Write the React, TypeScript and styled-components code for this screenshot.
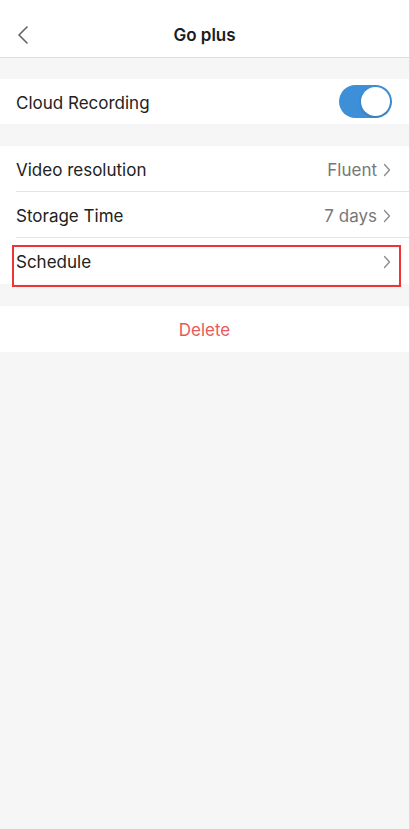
import React, { useState } from 'react'
import styled, { createGlobalStyle } from 'styled-components'

const GlobalStyle = createGlobalStyle`
  html, body {
    margin: 0;
    padding: 0;
    background: #f6f6f6;
    font-family: Inter, 'Liberation Sans', Arial, sans-serif;
  }
`

type Row = {
  label: string
  value?: string
  highlighted?: boolean
}

const rows: Row[] = [
  { label: 'Video resolution', value: 'Fluent' },
  { label: 'Storage Time', value: '7 days' },
  { label: 'Schedule', highlighted: true },
]

const Chevron = () => (
  <svg width='8' height='14' viewBox='0 0 8 14' fill='none'>
    <path d='M1.5 1.5L6.5 7L1.5 12.5' stroke='#8a8a8f' strokeWidth='1.3' strokeLinecap='round' strokeLinejoin='round' />
  </svg>
)

const App = () => {
  const [cloudOn, setCloudOn] = useState(true)

  return (
    <>
      <GlobalStyle />
      <Page>
        <Header>
          <BackButton aria-label='back'>
            <svg width='12' height='20' viewBox='0 0 12 20' fill='none'>
              <path d='M10 2L2 10L10 18' stroke='#666' strokeWidth='1.7' strokeLinecap='round' strokeLinejoin='round' />
            </svg>
          </BackButton>
          <Title>Go plus</Title>
        </Header>

        <Section $after={22}>
          <Item $height={45}>
            <Label>Cloud Recording</Label>
            <Toggle $on={cloudOn} onClick={() => setCloudOn(!cloudOn)}>
              <Knob $on={cloudOn} />
            </Toggle>
          </Item>
        </Section>

        <Section $after={22}>
          {rows.map((row, i) => (
            <Item key={row.label} $divider={i < rows.length - 1}>
              {row.highlighted && <Highlight />}
              <Label>{row.label}</Label>
              <Trailing>
                {row.value && <Value>{row.value}</Value>}
                <Chevron />
              </Trailing>
            </Item>
          ))}
        </Section>

        <Section>
          <DeleteButton>Delete</DeleteButton>
        </Section>
      </Page>
    </>
  )
}

const Page = styled.div`
  width: 409px;
  min-height: 829px;
  background: #f6f6f6;
  border-right: 1px solid #dcdcdc;
  display: flex;
  flex-direction: column;
`

const Header = styled.header`
  position: relative;
  height: 58px;
  margin-bottom: 21px;
  box-sizing: border-box;
  padding-top: 12px;
  background: #fff;
  border-bottom: 1px solid #dedede;
  display: flex;
  align-items: center;
  justify-content: center;
`

const BackButton = styled.button`
  position: absolute;
  left: 13px;
  top: 21px;
  border: none;
  background: none;
  padding: 4px;
  display: flex;
`

const Title = styled.h1`
  margin: 0;
  font-size: 17px;
  font-weight: 600;
  color: #1c1c1c;
`

const Section = styled.section<{ $after?: number }>`
  background: #fff;
  display: flex;
  flex-direction: column;
  margin-bottom: ${({ $after }) => $after ?? 0}px;
`

const Item = styled.div<{ $divider?: boolean; $height?: number }>`
  position: relative;
  height: ${({ $height }) => $height ?? 46}px;
  margin-left: 16px;
  padding: 2px 18px 0 0;
  display: flex;
  align-items: center;
  justify-content: space-between;
  border-bottom: ${({ $divider }) => ($divider ? '1px solid #e4e4e4' : 'none')};
  box-sizing: border-box;
`

const Highlight = styled.div`
  position: absolute;
  left: -4px;
  right: 8px;
  top: 7px;
  bottom: -3px;
  border: 2px solid #ee3434;
  pointer-events: none;
`

const Label = styled.span`
  font-size: 17px;
  color: #222;
`

const Trailing = styled.span`
  display: flex;
  align-items: center;
  gap: 6px;
`

const Value = styled.span`
  font-size: 17px;
  color: #777;
`

const Toggle = styled.button<{ $on: boolean }>`
  position: relative;
  width: 53px;
  height: 33px;
  margin: -2px -1px 0 0;
  border: none;
  border-radius: 17px;
  padding: 0;
  background: ${({ $on }) => ($on ? '#3d8fd8' : '#e5e5ea')};
  cursor: pointer;
`

const Knob = styled.span<{ $on: boolean }>`
  position: absolute;
  top: 2px;
  left: ${({ $on }) => ($on ? '22px' : '2px')};
  width: 29px;
  height: 29px;
  border-radius: 50%;
  background: #fff;
  box-shadow: 0 1px 3px rgba(0, 0, 0, 0.2);
`

const DeleteButton = styled.button`
  height: 46px;
  padding-top: 2px;
  border: none;
  background: #fff;
  font-family: inherit;
  font-size: 17px;
  color: #e85a5a;
  cursor: pointer;
`

export default App
